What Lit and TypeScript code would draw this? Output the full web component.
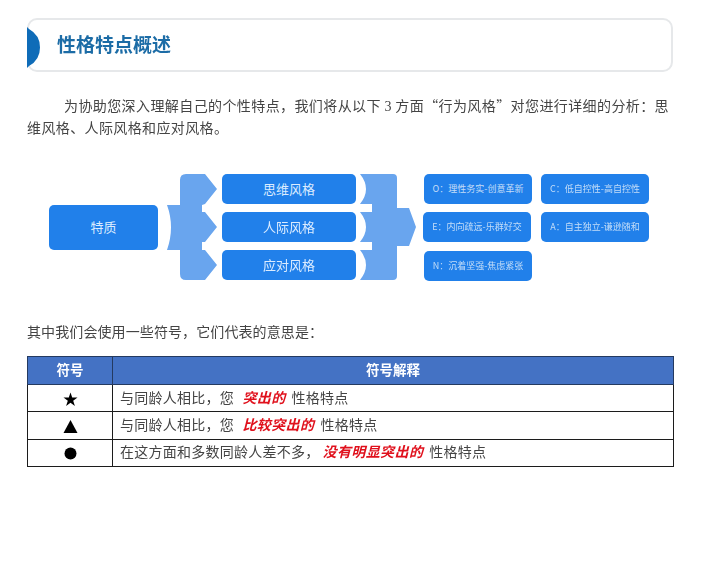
import { LitElement, html, css, svg } from "lit";
import { customElement } from "lit/decorators.js";

interface Node { t: string; x: number; y: number; w: number; h: number; k: string }

const NODES: Node[] = [
  { t: "特质", x: 49, y: 205, w: 109, h: 45, k: "big" },
  { t: "思维风格", x: 222, y: 174, w: 134, h: 30, k: "mid" },
  { t: "人际风格", x: 222, y: 212, w: 134, h: 30, k: "mid" },
  { t: "应对风格", x: 222, y: 250, w: 134, h: 30, k: "mid" },
  { t: "O：理性务实-创意革新", x: 424, y: 174, w: 108, h: 30, k: "small" },
  { t: "C：低自控性-高自控性", x: 541, y: 174, w: 108, h: 30, k: "small" },
  { t: "E：内向疏远-乐群好交", x: 423, y: 212, w: 108, h: 30, k: "small" },
  { t: "A：自主独立-谦逊随和", x: 541, y: 212, w: 108, h: 30, k: "small" },
  { t: "N：沉着坚强-焦虑紧张", x: 424, y: 251, w: 108, h: 30, k: "small" },
];

const ICONS = [
  svg`<polygon points="7.5,0.5 9.2,5.6 14.5,5.6 10.2,8.8 11.9,14 7.5,10.8 3.1,14 4.8,8.8 0.5,5.6 5.8,5.6"/>`,
  svg`<polygon points="7.5,1 14.5,14 0.5,14"/>`,
  svg`<circle cx="7.5" cy="7.5" r="6"/>`,
];

const ROWS = [
  { a: "与同龄人相比，您 ", r: "突出的", k: "wide" },
  { a: "与同龄人相比，您 ", r: "比较突出的", k: "wide" },
  { a: "在这方面和多数同龄人差不多，", r: "没有明显突出的", k: "" },
];

@customElement("app-root")
export class AppRoot extends LitElement {
  static styles = css`
    :host {
      display: block;
      width: 703px;
      height: 578px;
      background: #fff;
      overflow: hidden;
      font-family: "Noto Sans CJK SC", sans-serif;
      color: #444;
      font-size: 14px;
      font-weight: 400;
      text-spacing-trim: space-all;
    }
    .page { padding: 18px 30px 0 27px; filter: blur(0.3px); }
    .title {
      position: relative;
      height: 54px;
      box-sizing: border-box;
      border: 2px solid #e6e8ea;
      border-radius: 10px;
      display: flex;
      align-items: center;
      padding: 0 0 3px 28px;
      font-size: 19px;
      font-weight: 700;
      color: #1c6ca6;
    }
    .tab { position: absolute; left: -2px; top: 7px; width: 13px; height: 41px; }
    .tab path { fill: #0f6cb8; }
    p { margin: 0; }
    .intro {
      margin-top: 22px;
      width: 642px;
      line-height: 22px;
      letter-spacing: 0.38px;
    }
    .l1 { display: block; padding-left: 37px; text-align: justify; text-align-last: justify; white-space: nowrap; }
    .l2 { display: block; }
    .num { font-family: "Liberation Serif", serif; line-height: 1; }
    .diagram { position: absolute; left: 0; top: 0; width: 703px; height: 300px; }
    .arrows { position: absolute; left: 0; top: 0; }
    .arrows path { fill: #69a5ee; }
    .node {
      position: absolute;
      box-sizing: border-box;
      padding-bottom: 2px;
      background: #2180ea;
      border-radius: 5px;
      color: #dcecff;
      display: flex;
      align-items: center;
      justify-content: center;
      white-space: nowrap;
    }
    .big, .mid { font-size: 13px; }
    .small { font-size: 9px; color: #c4ddf8; }
    .lead { margin-top: 183px; line-height: 20px; letter-spacing: 0.1px; }
    table {
      margin-top: 15px;
      width: 647px;
      height: 111px;
      border-collapse: collapse;
      table-layout: fixed;
    }
    th, td { border: 1px solid #1c1c1c; padding: 0 0 3px; }
    th {
      background: #4472c4;
      color: #fff;
      font-size: 13.5px;
      font-weight: 700;
      height: 24px;
      border-color: #243a60;
    }
    .h1 { width: 84px; }
    td.sym { padding: 2px 0 0; }
    .sym svg { display: block; margin: 0 auto; width: 15px; height: 15px; fill: #000; }
    .desc { padding-left: 7px; letter-spacing: 0.25px; }
    .red {
      color: #e0101c;
      font-weight: 700;
      font-style: italic;
      margin: 0 6px 0 3px;
      letter-spacing: 0.4px;
    }
    .red.wide { margin-left: 5px; }
  `;

  private arrows() {
    return svg`<svg class="arrows" width="703" height="300" viewBox="0 0 703 300">
      <path d="M167 205 Q175 227 167 250 L180 250 L180 274 Q180 280 186 280 L205 280 L217 265 L205 250 L202 250 L202 242 L205 242 L217 227 L205 212 L202 212 L202 205 L205 204 L217 189 L205 174 L186 174 Q180 174 180 180 L180 205 Z"/>
      <path d="M360 174 L393 174 Q397 174 397 178 L397 208 L409 208 L416 227 L409 246 L397 246 L397 276 Q397 280 393 280 L360 280 Q372 265 360 250 L372 250 L372 242 L360 242 Q372 227 360 212 L372 212 L372 204 L360 204 Q372 189 360 174 Z"/>
    </svg>`;
  }

  render() {
    return html`
      <div class="page">
        <div class="title">
          <svg class="tab" viewBox="0 0 13 41"><path d="M0 0 L2 2 Q13 8 13 20.5 Q13 33 2 39 L0 41 Z"/></svg>
          性格特点概述
        </div>
        <p class="intro"><span class="l1">为协助您深入理解自己的个性特点，我们将从以下 <span class="num">3</span> 方面“行为风格”对您进行详细的分析：思</span><span class="l2">维风格、人际风格和应对风格。</span></p>
        <div class="diagram">
          ${this.arrows()}
          ${NODES.map(
            (n) => html`<div class="node ${n.k}" style="left:${n.x}px;top:${n.y}px;width:${n.w}px;height:${n.h}px">${n.t}</div>`
          )}
        </div>
        <p class="lead">其中我们会使用一些符号，它们代表的意思是：</p>
        <table>
          <tr><th class="h1">符号</th><th>符号解释</th></tr>
          ${ROWS.map(
            (r, i) => html`<tr>
              <td class="sym"><svg viewBox="0 0 15 15">${ICONS[i]}</svg></td>
              <td class="desc">${r.a}<span class="red ${r.k}">${r.r}</span>性格特点</td>
            </tr>`
          )}
        </table>
      </div>
    `;
  }
}
